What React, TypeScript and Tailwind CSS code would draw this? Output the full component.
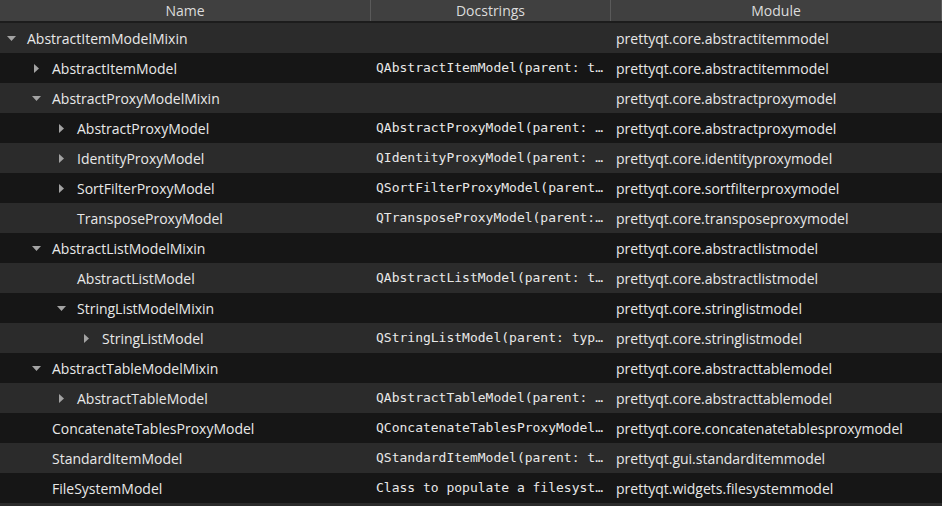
import React from 'react'

type Row = {
  name: string
  level: 0 | 1 | 2 | 3
  arrow: 'down' | 'right' | null
  doc: string
  module: string
}

const rows: Row[] = [
  { name: 'AbstractItemModelMixin', level: 0, arrow: 'down', doc: '', module: 'prettyqt.core.abstractitemmodel' },
  { name: 'AbstractItemModel', level: 1, arrow: 'right', doc: 'QAbstractItemModel(parent: t…', module: 'prettyqt.core.abstractitemmodel' },
  { name: 'AbstractProxyModelMixin', level: 1, arrow: 'down', doc: '', module: 'prettyqt.core.abstractproxymodel' },
  { name: 'AbstractProxyModel', level: 2, arrow: 'right', doc: 'QAbstractProxyModel(parent: …', module: 'prettyqt.core.abstractproxymodel' },
  { name: 'IdentityProxyModel', level: 2, arrow: 'right', doc: 'QIdentityProxyModel(parent: …', module: 'prettyqt.core.identityproxymodel' },
  { name: 'SortFilterProxyModel', level: 2, arrow: 'right', doc: 'QSortFilterProxyModel(parent…', module: 'prettyqt.core.sortfilterproxymodel' },
  { name: 'TransposeProxyModel', level: 2, arrow: null, doc: 'QTransposeProxyModel(parent:…', module: 'prettyqt.core.transposeproxymodel' },
  { name: 'AbstractListModelMixin', level: 1, arrow: 'down', doc: '', module: 'prettyqt.core.abstractlistmodel' },
  { name: 'AbstractListModel', level: 2, arrow: null, doc: 'QAbstractListModel(parent: t…', module: 'prettyqt.core.abstractlistmodel' },
  { name: 'StringListModelMixin', level: 2, arrow: 'down', doc: '', module: 'prettyqt.core.stringlistmodel' },
  { name: 'StringListModel', level: 3, arrow: 'right', doc: 'QStringListModel(parent: typ…', module: 'prettyqt.core.stringlistmodel' },
  { name: 'AbstractTableModelMixin', level: 1, arrow: 'down', doc: '', module: 'prettyqt.core.abstracttablemodel' },
  { name: 'AbstractTableModel', level: 2, arrow: 'right', doc: 'QAbstractTableModel(parent: …', module: 'prettyqt.core.abstracttablemodel' },
  { name: 'ConcatenateTablesProxyModel', level: 1, arrow: null, doc: 'QConcatenateTablesProxyModel…', module: 'prettyqt.core.concatenatetablesproxymodel' },
  { name: 'StandardItemModel', level: 1, arrow: null, doc: 'QStandardItemModel(parent: t…', module: 'prettyqt.gui.standarditemmodel' },
  { name: 'FileSystemModel', level: 1, arrow: null, doc: 'Class to populate a filesyst…', module: 'prettyqt.widgets.filesystemmodel' },
]

const indent = ['pl-0', 'pl-[25px]', 'pl-[50px]', 'pl-[75px]']

function Arrow({ dir }: { dir: 'down' | 'right' | null }) {
  if (!dir) return null
  if (dir === 'down')
    return (
      <svg width="9" height="5" viewBox="0 0 9 5">
        <path d="M0 0 H9 L4.5 5 Z" fill="#a3a3a3" />
      </svg>
    )
  return (
    <svg width="5" height="9" viewBox="0 0 5 9">
      <path d="M0 0 V9 L5 4.5 Z" fill="#a3a3a3" />
    </svg>
  )
}

export default function App() {
  const sans = "font-['Open_Sans',sans-serif]"
  return (
    <div className={`w-[942px] h-[506px] overflow-hidden bg-[#2b2b2b] text-[14px] text-[#e8e8e8] ${sans}`}>
      <div className="flex h-[23px] bg-[#404040] border-b-2 border-[#1c1c1c] text-[#dcdcdc]">
        <div className="w-[371px] flex items-center justify-center border-r border-[#5a5a5a]">Name</div>
        <div className="w-[240px] flex items-center justify-center border-r border-[#5a5a5a]">Docstrings</div>
        <div className="flex-1 flex items-center justify-center border-r border-[#5a5a5a]">Module</div>
      </div>
      {rows.map((r, i) => (
        <div key={i} className={`flex h-[30px] items-center ${i % 2 === 0 ? 'bg-[#2b2b2b]' : 'bg-[#161616]'}`}>
          <div className={`w-[371px] flex items-center ${indent[r.level]}`}>
            <div className="w-[27px] flex justify-center pr-[4px]">
              <Arrow dir={r.arrow} />
            </div>
            <span className="whitespace-nowrap">{r.name}</span>
          </div>
          <div className="w-[240px] pl-[5px] whitespace-nowrap overflow-hidden font-['DejaVu_Sans_Mono',monospace] text-[13px]">
            {r.doc}
          </div>
          <div className="flex-1 pl-[5px] whitespace-nowrap">{r.module}</div>
        </div>
      ))}
    </div>
  )
}
